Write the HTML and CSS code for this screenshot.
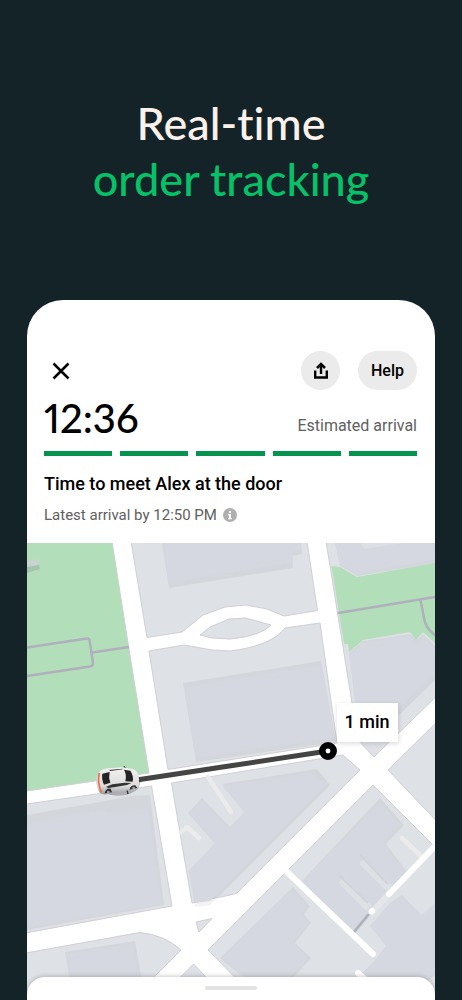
FILE: index.html
```html
<!DOCTYPE html>
<html lang="en">
<head>
<meta charset="utf-8">
<meta name="viewport" content="width=device-width, initial-scale=1">
<title>Real-time order tracking</title>
<link rel="stylesheet" href="styles.css">
</head>
<body>
<main class="page">
  <h1 class="headline">Real-time<span class="headline-accent">order tracking</span></h1>
  <section class="phone">
    <header class="status">
      <div class="toolbar">
        <button class="close" type="button" aria-label="Close">
          <svg width="18" height="18" viewBox="0 0 18 18" fill="none" stroke="#000" stroke-width="2.5"><path d="M1.5 1.5 16.5 16.5M16.5 1.5 1.5 16.5"/></svg>
        </button>
        <button class="pill share" type="button" aria-label="Share">
          <svg width="16" height="18" viewBox="0 0 16 18" fill="none" stroke="#000" stroke-width="2.400"><path d="M2.200 8.500v7h11.600v-7M8 12V3"/><path d="M4 6 8 2l4 4" stroke-width="2.600"/></svg>
        </button>
        <button class="pill help" type="button">Help</button>
      </div>
      <div class="eta">
        <span class="time">12:36</span>
        <span class="eta-label">Estimated arrival</span>
      </div>
      <div class="steps"><i></i><i></i><i></i><i></i><i></i></div>
      <h2 class="title">Time to meet Alex at the door</h2>
      <p class="latest">Latest arrival by 12:50 PM
        <svg class="info" width="14" height="14" viewBox="0 0 14 14"><circle cx="7" cy="7" r="7" fill="#afafaf"/><path d="M6 3h2v2H6zM5 6h3v4h1v1.300H5V10h1V7.200H5z" fill="#fff"/></svg>
      </p>
    </header>
    <div class="map">
      <svg class="map-art" viewBox="27 543 408 457" preserveAspectRatio="xMidYMin slice" role="img" aria-label="Map with courier one minute away">
        <defs>
          <linearGradient id="body" x1="0" y1="0" x2="0" y2="1"><stop offset="0" stop-color="#f2f2f2"/><stop offset=".7" stop-color="#dcdcdc"/><stop offset="1" stop-color="#999"/></linearGradient>
          <filter id="soft" x="-30%" y="-30%" width="160%" height="160%"><feGaussianBlur stdDeviation="2"/></filter>
        </defs>
        <rect x="27" y="543" width="408" height="457" fill="#fff"/>
        <g class="block">
          <path class="park" d="M20 535H111L128.500 646 149 773 20 792Z"/>
          <path d="M130 535H306L317.500 610.500 284 616 267 609 246 605 225 607 203 615 182 632 147 637.500Z"/>
          <path d="M200 635 210 627 229 619 246 618 271 625Q261 636 230 639L212 638Z"/>
          <path d="M149 651 184 645 212 650 230 651Q271 646 285 628L320 623 337 743 168 769.500Z"/>
          <path d="M325 535 352 703 357 739 374 757 445 688V535Z"/>
          <path d="M388 770 445 714V830Z"/>
          <path d="M20 805 151.500 786 172 906 20 934Z"/>
          <path d="M20 954 140 932.500Q165 935 181 950L130 1001H20Z"/>
          <path d="M171.500 783 343 755 360 770 237 893 230 895 192 903Z"/>
          <path d="M196 922 212 918.500 199 932Z"/>
          <path d="M193.500 964 229 1001H157Z"/>
          <path d="M208 950 373 785 434 846 445 836V1001H258Z"/>
        </g>
        <path fill="#b3deba" d="M331.500 566 340 567 357 577 435 563V643L423 632 416 640 410 632 363 640 349 652 348 644H344Z"/>
        <path class="path" d="M27 647.500 87 638.500Q89 638 89.500 640L93 663Q93 666 90 666.500L27 676M92 652.500 129 647"/>
        <path class="path" d="M338 613 435 597M420.500 600 424 618Q425 627 435 635.500"/>
        <path fill="#c8d3cf" d="M27 561 39 559V565L27 567Z"/><path fill="#a4c5ac" d="M27 567 39 565 40 569 27 573Z"/>
        <g class="shade">
          <path d="M162 543 169 588 293 568 292 556 302 554 301 543Z"/>
          <path d="M335 543 340 566 358 576 435 563V543Z"/>
          <path d="M183 683 321 661 336 742 196 762Z"/>
          <path d="M349 653 363 641 410 634 416 640 423 634 435 646V680L398 716 356 710Z"/>
          <path d="M27 815 105 801 129 796 150 795 164 905 27 930Z"/>
          <path d="M65 952 135 941 145 1000H73Z"/>
          <path d="M317 769 330 785 210 905 195 907 189 872 216 845 188 813 202 798 230 827 245 812 230 793 222 784Z"/>
          <path d="M380 798 404 825 386 844 407 872 388 894 356 933 299 884Z"/>
          <path d="M293 887 310 906 304 914 311 923 295 943 311 958 292 979 270 1000 220 958Z"/>
          <path d="M402 895 422 917 435 904V975L405 1000 362 973 389 948 370 926 391 902Z"/>
        </g>
        <g class="building">
          <path d="M162 543 169 583 293 562 292 552 300 550V543Z"/>
          <path d="M335 543 341 565 358 573 435 559V543Z"/>
          <path d="M184 687 322 665 334 738 196 758Z"/>
          <path d="M349 655 363 643 410 636 416 643 423 637 435 649V675L398 710 357 709Z"/>
          <path d="M27 826 34 822 105 809 106 812 125 812 148 808 162 904 27 928Z"/>
          <path d="M67 954 134 943 142 1000H75Z"/>
          <path d="M222 786 311 773 327 784 210 901 195 903 189 870 215 843 190 813 202 801 230 829 244 812 230 795Z"/>
          <path d="M380 803 400 825 383 843 405 872 388 891 354 930 301 882Z"/>
          <path d="M291 890 307 906 302 914 309 923 293 942 308 958 292 975 267 1000 223 958Z"/>
          <path d="M402 897 422 915 435 903V972L405 1000 364 974 386 946 370 926 392 902Z"/>
        </g>
        <path fill="#dcdfe4" d="M361 543 364 549 403 543Z"/>
        <path d="M362 861 390 889M341 880 369 908" stroke="#dde0e5" stroke-width="8"/>
        <path d="M360 855 388 884M339 875 368 903" stroke="#d0d3d9" stroke-width="2"/>
        <g class="lane">
          <path d="M208 777 231 812M181 832 187 827 199 838M402 838 423 858" stroke="#ebebeb" stroke-width="4.500"/>
          <path d="M388 895 372 912" stroke="#e4e6ea" stroke-width="6"/>
          <path d="M368 915 354 932" stroke="#adb0b8" stroke-width="2.500"/>
          <path d="M286 871 373 954M437 844 389 894M371.500 911.500 372 911M358 973 370 984" stroke="#fff" stroke-width="6"/>
        </g>
        <path d="M130 781 328 751" stroke="#444" stroke-width="5"/>
        <circle cx="328" cy="751" r="5.700" fill="#fff" stroke="#000" stroke-width="6.500"/>
        <g transform="translate(85 755) scale(.3333)">
          <ellipse cx="100" cy="82" rx="66" ry="40" fill="#000" opacity=".22" filter="url(#soft)"/>
          <path d="M117 34 123 44M126 105 129 117" stroke="#333" stroke-width="4"/>
          <path d="M46 47Q54 41 70 40L112 37 142 42Q154 45 159 56 164 72 162 88 160 99 150 103L112 109 70 117Q52 121 44 113 34 99 35 78 36 56 46 47Z" fill="url(#body)"/>
          <path d="M43 54Q36 80 49 112" fill="none" stroke="#f1694a" stroke-width="5"/>
          <path d="M52 56 74 51Q70 68 76 83L57 89Q49 72 52 56Z" fill="#242424"/>
          <path d="M117 44 136 47Q147 63 143 80L121 79Q126 59 117 44Z" fill="#242424"/>
          <path d="M72 45 112 41 113 43 76 48ZM63 95 82 88 120 83 139 84 126 90 91 96 70 99Z" fill="#333"/>
          <path d="M59 115Q63 98 77 101L81 112ZM133 104Q137 90 151 91L157 99Z" fill="#333"/>
          <circle cx="70" cy="111" r="4" fill="#aaa"/><circle cx="146" cy="99" r="4" fill="#aaa"/>
        </g>
        <rect x="337" y="704" width="62" height="40" fill="#000" opacity=".12" filter="url(#soft)"/>
        <rect x="337" y="703" width="61" height="39" fill="#fff"/>
        <text class="map-label" x="367" y="728" text-anchor="middle">1 min</text>
      </svg>
      <div class="sheet"><span class="grabber"></span></div>
    </div>
  </section>
</main>
</body>
</html>
```
FILE: styles.css
```css
* { box-sizing: border-box; }
body { margin: 0; background: #142328; font-family: Roboto, sans-serif; color: #000; }
button { border: 0; padding: 0; font: inherit; color: inherit; cursor: pointer; }
.page { display: flex; flex-direction: column; height: 100vh; padding: 95px 27px 0; overflow: hidden; }
.headline { margin: 0 0 93px; font: 500 45px/56px Lato, sans-serif; font-variant-ligatures: none; color: #faf1eb; text-align: center; }
.headline-accent { display: block; color: #06c167; }
.phone { display: flex; flex-direction: column; flex: 1; min-height: 0; background: #fff; border-radius: 36px 36px 0 0; overflow: hidden; }
.status { padding: 51px 18px 17px 17px; }
.toolbar { display: flex; align-items: center; gap: 18px; height: 39px; }
.close { display: flex; padding: 8px; margin-right: auto; background: none; }
.pill { display: flex; align-items: center; justify-content: center; height: 39px; border-radius: 20px; background: #ebebeb; }
.share { width: 39px; }
.help { width: 59px; font-size: 16px; font-weight: 500; }
.eta { display: flex; align-items: center; justify-content: space-between; margin-top: 4px; }
.time { font: 500 40px/48px Lato, sans-serif; font-variant-numeric: proportional-nums; }
.eta-label, .latest { font-size: 16px; color: #606060; }
.eta-label { padding-top: 15px; }
.steps { display: flex; gap: 8px; margin-top: 9px; }
.steps i { flex: 1; height: 5px; background: #05944f; }
.title { margin: 16px 0 0; font-size: 18px; line-height: 24px; font-weight: 500; }
.latest { display: flex; align-items: center; gap: 6px; margin: 8px 0 0; font-size: 15px; line-height: 22px; }
.map { position: relative; flex: 1; min-height: 0; overflow: hidden; }
.map-art { display: block; width: 100%; height: 100%; }
.block path { fill: #dee1e6; stroke: #cfcfd5; stroke-width: 1; }
.block .park { fill: #b3deba; }
.path { fill: none; stroke: #b0afbc; stroke-width: 2.5; }
.shade { fill: #000; opacity: .045; }
.building { fill: #d5d8e0; }
.lane { fill: none; stroke-linecap: round; stroke-linejoin: round; }
.map-label { font-size: 18px; font-weight: 500; }
.sheet { position: absolute; inset: auto 0 0; display: flex; justify-content: center; height: 23px; padding-top: 9px; background: #fff; border-radius: 18px 18px 0 0; box-shadow: 0 -1px 4px rgba(0, 0, 0, .2); }
.grabber { width: 52px; height: 4px; border-radius: 2px; background: #e2e2e2; }
```
